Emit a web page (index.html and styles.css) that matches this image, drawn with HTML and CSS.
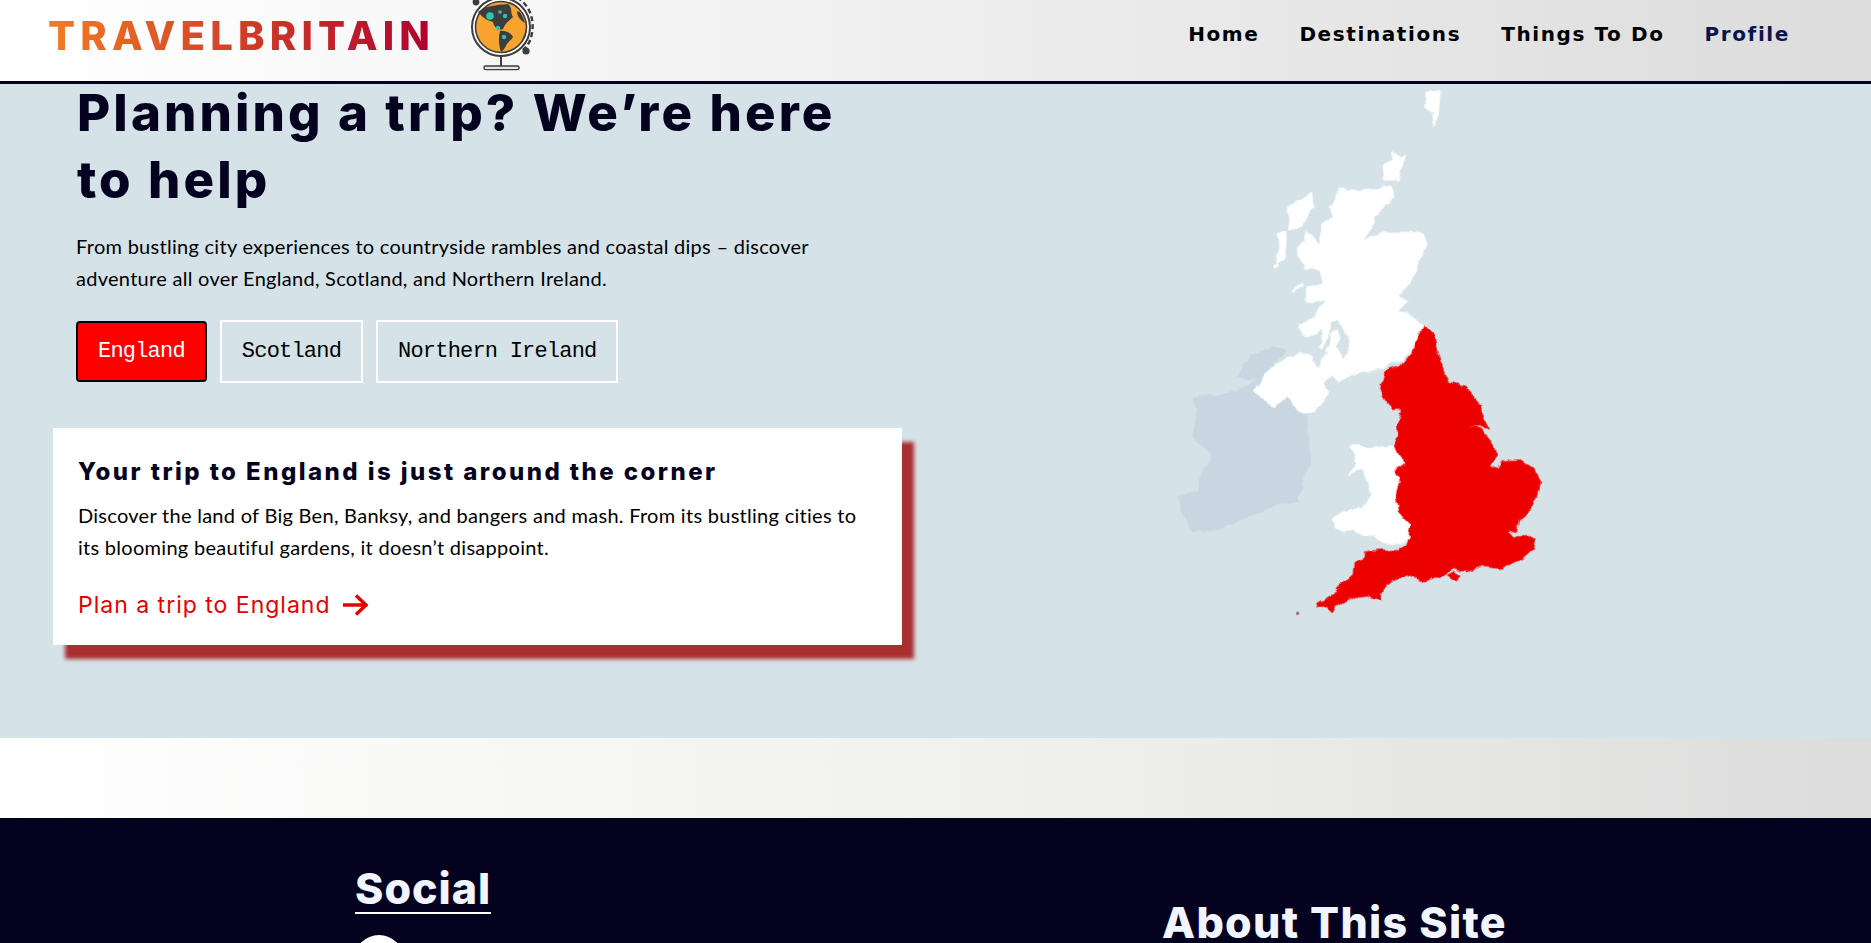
FILE: index.html
```html
<!DOCTYPE html>
<html>
  <head>
    <title>Travel Britain</title>
    <link rel="stylesheet" href="styles.css">
  </head>
  <body>
    <header class="site-header">
      <div class="brand">
        <span class="brand-name">TRAVELBRITAIN</span>
        <svg class="brand-globe" viewBox="0 0 90 81" width="90" height="81">
          <!-- dashed orbit -->
          <path d="M49 -6 C66 0 74 16 71 33 C70 40 67 46 62 50" fill="none" stroke="#3d3d3d" stroke-width="2.4" stroke-dasharray="5 3"/>
          <circle cx="65" cy="51" r="3.6" fill="#3d3d3d"/>
          <circle cx="15" cy="2" r="3.4" fill="#3d3d3d"/>
          <circle cx="40" cy="27" r="29" fill="#fff" stroke="#3d3d3d" stroke-width="2"/>
          <circle cx="40" cy="27" r="25.5" fill="#f9a32f" stroke="#3d3d3d" stroke-width="1.6"/>
          <!-- americas -->
          <path d="M17 12 C24 6 34 5 47 4 C52 8 49 13 52 17 C48 21 45 22 42 29 C37 31 33 27 32 22 C27 21 22 18 17 12Z" fill="#3d3d3d"/>
          <path d="M39 31 C44 30 50 33 52 37 C50 41 46 42 45 46 C43 49 42 51 40 52 C38 46 37 38 39 31Z" fill="#3d3d3d"/>
          <path d="M56 12 C58 9 62 16 64 23 C61 21 56 17 56 12Z M62 38 C64 33 65 30 65 28 C66 33 65 38 60 43Z" fill="#3d3d3d"/>
          <circle cx="29" cy="16" r="3.8" fill="#2fc4b0"/>
          <circle cx="39" cy="12" r="1.8" fill="#2fc4b0"/>
          <circle cx="44" cy="16" r="2.2" fill="#2fc4b0"/>
          <circle cx="37" cy="28" r="2.2" fill="#2fc4b0"/>
          <circle cx="43" cy="37" r="2.2" fill="#2fc4b0"/>
          <rect x="39" y="56" width="2" height="11" fill="#3d3d3d"/>
          <rect x="23" y="66" width="35" height="3.6" rx="1.5" fill="#e6e6e6" stroke="#3d3d3d" stroke-width="1.4"/>
        </svg>
      </div>
      <nav class="main-nav">
        <a href="#">Home</a>
        <a href="#">Destinations</a>
        <a href="#">Things To Do</a>
        <a href="#" class="current">Profile</a>
      </nav>
    </header>

    <section class="hero">
      <div class="hero-left">
        <div class="hero-intro">
          <h1>Planning a trip? We’re here to help</h1>
          <p>From bustling city experiences to countryside rambles and coastal dips – discover adventure all over England, Scotland, and Northern Ireland.</p>
          <div class="tabs">
            <button type="button" class="tab active">England</button>
            <button type="button" class="tab">Scotland</button>
            <button type="button" class="tab">Northern Ireland</button>
          </div>
        </div>
        <div class="trip-card">
          <h2>Your trip to England is just around the corner</h2>
          <p>Discover the land of Big Ben, Banksy, and bangers and mash. From its bustling cities to its blooming beautiful gardens, it doesn’t disappoint.</p>
          <a href="#" class="trip-link">Plan a trip to England
            <svg viewBox="0 0 26 22" width="26" height="22"><path d="M1 11H24M14 1.5L24 11L14 20.5" fill="none" stroke="#e60000" stroke-width="3.4"/></svg>
          </a>
        </div>
      </div>

      <svg class="hero-map" viewBox="0 42 1500 1680" width="500" height="560">
        <defs>
          <!-- roughens the coastlines so they read as a map image -->
          <filter id="coast" x="-5%" y="-5%" width="110%" height="110%" filterUnits="objectBoundingBox" primitiveUnits="userSpaceOnUse">
            <feTurbulence type="fractalNoise" baseFrequency="0.03" numOctaves="2" seed="4" result="noise"/>
            <feDisplacementMap in="SourceGraphic" in2="noise" scale="20" xChannelSelector="R" yChannelSelector="G"/>
            <feGaussianBlur stdDeviation="1.8"/>
          </filter>
        </defs>
        <g filter="url(#coast)">
          <!-- scotland -->
          <g fill="#fff" stroke="#fff" stroke-width="4" stroke-linejoin="round">
            <path d="M635 358L680 362L730 358L785 348L790 380L760 410L735 440L720 480L700 515L760 487L880 488L890 520L870 565L860 600L835 640L810 675L830 695L800 725L830 730L878 765L855 790L865 815L815 868L765 890L705 905L660 915L625 935L600 915L585 940L560 895L590 850L605 810L640 870L665 815L640 770L620 750L600 760L595 790L575 840L570 830L580 770L560 790L530 800L510 770L545 745L590 690L530 695L530 650L580 640L570 600L525 590L500 540L530 490L570 530L575 470L610 440L605 410Z"/>
            <path d="M545 370L548 410L510 470L480 480L472 410L520 385Z"/>
            <path d="M470 485L462 570L440 580L450 530L440 495Z"/>
            <path d="M760 290L790 270L785 245L810 265L830 250L815 280L805 330L765 330Z"/>
            <path d="M890 65L930 60L925 120L915 165L908 130L885 110Z"/>
            <path d="M480 668L520 638" fill="none" stroke-width="7"/>
            <ellipse cx="615" cy="802" rx="12" ry="21"/>
            <circle cx="438" cy="590" r="6"/>
            <circle cx="528" cy="590" r="8"/>
          </g>
          <g transform="translate(60 810)">
            <!-- ireland -->
            <path fill="#c9d6e2" stroke="#c9d6e2" stroke-width="4" stroke-linejoin="round" d="M260 110L300 50L370 20L405 30L370 70L340 105L310 150L340 180L375 200L410 165L445 215L470 225L478 370L455 430L445 485L400 490L340 510L260 545L175 575L130 575L100 530L85 470L145 455L150 415L190 345L130 290L140 225L135 170L215 165L280 145L320 120Z"/>
            <!-- northern ireland -->
            <path fill="#fff" stroke="#fff" stroke-width="4" stroke-linejoin="round" d="M310 150L345 110L380 70L445 40L480 45L515 120L535 155L520 180L490 215L445 215L410 165L375 200L340 180Z"/>
            <!-- wales -->
            <path fill="#fff" stroke="#fff" stroke-width="4" stroke-linejoin="round" d="M610 315L640 320L700 325L735 320L745 345L768 378L745 380L735 395L750 420L738 465L745 510L765 535L785 555L780 590L750 610L705 608L670 585L640 585L610 570L575 575L540 540L570 520L640 500L665 465L650 420L640 385L595 405L625 370L600 320Z"/>
            <!-- england -->
            <path fill="#ed0000" stroke="#ed0000" stroke-width="3" stroke-linejoin="round" d="M818 -45L855 -15L860 20L875 70L895 125L945 140L975 175L995 195L990 215L1018 270L985 255L950 258L985 262L1020 300L1040 345L1018 375L1045 385L1060 362L1110 360L1150 385L1172 425L1160 480L1135 510L1125 530L1105 545L1100 570L1075 575L1090 590L1158 590L1150 625L1110 660L1050 685L1000 680L950 695L930 690L905 685L885 705L850 712L830 722L805 720L770 705L725 725L700 745L690 780L650 765L610 770L560 800L550 818L530 800L505 803L500 790L560 755L575 730L610 700L612 670L640 660L645 635L690 630L750 632L780 590L785 555L765 535L745 510L738 465L750 420L735 395L745 380L768 378L745 345L732 315L745 290L742 250L755 205L725 205L700 165L692 145L705 95L750 80L785 40Z"/>
            <path fill="#ed0000" d="M890 705L910 695L932 705L915 722Z"/>
          </g>
        </g>
        <circle cx="503" cy="1630" r="5" fill="#a8606e"/>
      </svg>
    </section>

    <div class="band"></div>

    <footer class="site-footer">
      <div class="social">
        <h3>Social</h3>
        <div class="social-icon"></div>
      </div>
      <div class="about">
        <h3>About This Site</h3>
      </div>
    </footer>
  </body>
</html>
```

FILE: styles.css
```css
/* Global styles */
html, body {
  height: 100%;
}

body {
  font-family: Lato, "Noto Sans", sans-serif;
  margin: 0;
  overflow: hidden;
  color: #000;
}

/* Header styles */
.site-header {
  display: flex;
  align-items: center;
  justify-content: space-between;
  height: 81px;
  overflow: hidden;
  border-bottom: 3px solid #05021f;
  background: linear-gradient(90deg, #fff 0%, #f2f2f2 40%, #dcdcdc 100%);
}

.brand {
  display: flex;
  align-items: center;
  padding-left: 48px;
}

.brand-name {
  margin-bottom: 10px;
  font-family: Inter, sans-serif;
  font-weight: 800;
  font-size: 40px;
  letter-spacing: 5.2px;
  background: linear-gradient(90deg, #f47b20, #b00030);
  -webkit-background-clip: text;
  background-clip: text;
  color: transparent;
}

.brand-globe {
  margin-left: 26px;
}

.main-nav {
  display: flex;
  gap: 40px;
  padding-right: 81px;
  margin-top: -13px;
}

.main-nav a {
  font-family: "DejaVu Sans", sans-serif;
  font-weight: 700;
  font-size: 20px;
  letter-spacing: 1.6px;
  color: #000;
  text-decoration: none;
}

.main-nav a.current {
  color: #0a1550;
}

/* Hero styles */
.hero {
  display: flex;
  height: 654px;
  background-color: #d5e3e9;
}

.hero-left {
  width: 850px;
  margin-left: 53px;
}

.hero-intro {
  padding-left: 23px;
}

h1 {
  margin: -5px 0 0 1px;
  width: 780px;
  font-family: Inter, sans-serif;
  font-weight: 800;
  font-size: 51px;
  line-height: 67px;
  letter-spacing: 3.1px;
  color: #05021f;
}

.hero-intro p {
  margin: 17px 0 0;
  width: 760px;
  font-size: 20px;
  line-height: 32px;
  letter-spacing: 0.28px;
}

/* Region buttons */
.tabs {
  display: flex;
  align-items: center;
  gap: 13px;
  margin-top: 26px;
}

.tab {
  height: 63px;
  padding: 0 20px;
  border: 2px solid #fff;
  background: transparent;
  font-family: "Liberation Mono", monospace;
  font-size: 22px;
  letter-spacing: -0.8px;
  color: #000;
}

.tab.active {
  height: 61px;
  border: 2px solid #000;
  border-radius: 4px;
  background-color: #ff0000;
  color: #fff;
}

/* Card styles */
.trip-card {
  box-sizing: border-box;
  width: 849px;
  height: 217px;
  margin-top: 45px;
  padding: 26px 25px 0;
  background-color: #fff;
  box-shadow: 12px 14px 4px #a92e30;
}

.trip-card h2 {
  margin: 0;
  font-family: Inter, sans-serif;
  font-weight: 800;
  font-size: 24px;
  line-height: 36px;
  letter-spacing: 2.45px;
  color: #05021f;
}

.trip-card p {
  margin: 9px 0 0;
  font-size: 20px;
  line-height: 32px;
  letter-spacing: 0.28px;
}

.trip-link {
  display: flex;
  align-items: center;
  gap: 11px;
  margin-top: 28px;
  font-family: Inter, sans-serif;
  font-size: 23px;
  letter-spacing: 1px;
  color: #e60000;
  text-decoration: none;
}

.hero-map {
  margin-left: 227px;
}

/* Band between hero and footer */
.band {
  height: 80px;
  background: linear-gradient(90deg, #fff 0%, #eeeeec 60%, #dcdcdc 100%);
}

/* Footer styles */
.site-footer {
  display: flex;
  height: 125px;
  overflow: hidden;
  background-color: #05021f;
  color: #f0f5ff;
}

.site-footer h3 {
  margin: 0;
  font-family: Inter, sans-serif;
  font-weight: 800;
  font-size: 43px;
}

.social {
  margin-left: 355px;
  padding-top: 46px;
}

.social h3 {
  width: 136px;
  line-height: 48px;
  border-bottom: 2px solid #fff;
  letter-spacing: 1px;
}

.social-icon {
  width: 50px;
  height: 50px;
  margin: 21px 0 0 -1px;
  border-radius: 50%;
  background-color: #fff;
}

.about {
  margin-left: 671px;
  padding-top: 83px;
}

.about h3 {
  line-height: 42px;
  letter-spacing: 1.3px;
}
```
